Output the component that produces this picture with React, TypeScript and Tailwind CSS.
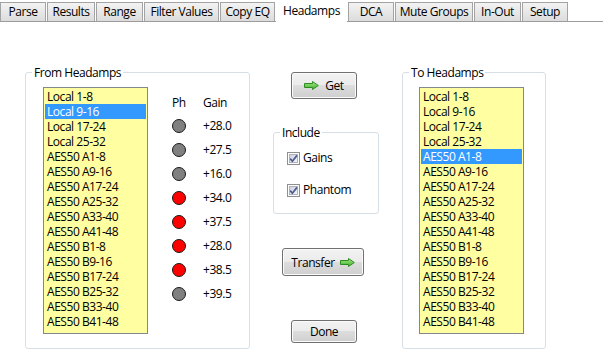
import { type ReactNode } from "react";

const TABS = [
  { label: "Parse", w: "w-[46px]" },
  { label: "Results", w: "w-[48px]" },
  { label: "Range", w: "w-[47px]" },
  { label: "Filter Values", w: "w-[75px]" },
  { label: "Copy EQ", w: "w-[55px]" },
  { label: "Headamps", w: "w-[71px]", active: true },
  { label: "DCA", w: "w-[46px]" },
  { label: "Mute Groups", w: "w-[78px]" },
  { label: "In-Out", w: "w-[47px]" },
  { label: "Setup", w: "w-[46px]" },
];

const HEADAMPS = [
  "Local 1-8",
  "Local 9-16",
  "Local 17-24",
  "Local 25-32",
  "AES50 A1-8",
  "AES50 A9-16",
  "AES50 A17-24",
  "AES50 A25-32",
  "AES50 A33-40",
  "AES50 A41-48",
  "AES50 B1-8",
  "AES50 B9-16",
  "AES50 B17-24",
  "AES50 B25-32",
  "AES50 B33-40",
  "AES50 B41-48",
];

const CHANNELS = [
  { ph: false, gain: "+28.0" },
  { ph: false, gain: "+27.5" },
  { ph: false, gain: "+16.0" },
  { ph: true, gain: "+34.0" },
  { ph: true, gain: "+37.5" },
  { ph: true, gain: "+28.0" },
  { ph: true, gain: "+38.5" },
  { ph: false, gain: "+39.5" },
];

function GreenArrow() {
  return (
    <svg width="15" height="9" viewBox="0 0 15 9" className="shrink-0">
      <defs>
        <linearGradient id="ga" x1="0" y1="0" x2="0" y2="1">
          <stop offset="0" stopColor="#a8ec86" />
          <stop offset="1" stopColor="#3fae2a" />
        </linearGradient>
      </defs>
      <path
        d="M0.5 2.5 H8.5 V0.5 L14.3 4.5 L8.5 8.5 V6.5 H0.5 Z"
        fill="url(#ga)"
        stroke="#2e8c22"
        strokeWidth="1"
        strokeLinejoin="round"
      />
    </svg>
  );
}

function Checkbox() {
  return (
    <svg width="13" height="13" viewBox="0 0 13 13" className="shrink-0">
      <defs>
        <linearGradient id="cb" x1="0" y1="0" x2="1" y2="1">
          <stop offset="0" stopColor="#cbcfd5" />
          <stop offset="1" stopColor="#f6f6f6" />
        </linearGradient>
      </defs>
      <rect x="0.5" y="0.5" width="12" height="12" fill="#fdfdfd" stroke="#8f8f8f" />
      <rect x="2.5" y="2.5" width="8" height="8" fill="url(#cb)" stroke="#b0b5bc" />
      <path d="M3.2 6.6 L5.4 9.2 L10 3.4" fill="none" stroke="#4a5d94" strokeWidth="1.7" />
    </svg>
  );
}

function WinButton({ children, className }: { children: ReactNode; className: string }) {
  return (
    <button
      className={`flex items-center justify-center gap-[5px] rounded-[3px] border border-[#707070] bg-[linear-gradient(#f2f2f2_0%,#ebebeb_50%,#dddddd_50%,#cfcfcf_100%)] shadow-[inset_0_0_0_1px_#fbfbfb] leading-[15px] ${className}`}
    >
      {children}
    </button>
  );
}

function ListBox({ items, selected }: { items: string[]; selected: number }) {
  return (
    <div className="w-[105px] h-[247px] shrink-0 border border-[#828790] bg-[#ffffa2] p-px">
      {items.map((it, i) => (
        <div
          key={it}
          className={`h-[15px] pl-[2px] leading-[15px] whitespace-nowrap ${
            i === selected ? "bg-[#3399ff] text-white" : ""
          }`}
        >
          {it}
        </div>
      ))}
    </div>
  );
}

function GroupBox({
  title,
  className,
  children,
}: {
  title: string;
  className: string;
  children: ReactNode;
}) {
  return (
    <fieldset className={`shrink-0 rounded-[3px] border border-[#d5dfe5] ${className}`}>
      <legend className="ml-[6px] px-[2px] leading-[15px]">{title}</legend>
      {children}
    </fieldset>
  );
}

export default function App() {
  return (
    <div className="w-[603px] h-[360px] overflow-hidden bg-white text-[12px] tracking-[-0.45px] text-black font-['Open_Sans',sans-serif]">
      {/* Tabs */}
      <div className="flex h-[22px] items-end border-b border-[#9c9c9c]">
        {TABS.map((t) =>
          t.active ? (
            <div
              key={t.label}
              className={`${t.w} mr-px -mb-px h-[22px] bg-white pt-[3px] text-center leading-[15px]`}
            >
              {t.label}
            </div>
          ) : (
            <div
              key={t.label}
              className={`${t.w} mr-px h-[19px] border border-b-0 border-[#a3a3a3] bg-[linear-gradient(#f3f3f3,#dcdcdc)] text-center leading-[17px]`}
            >
              {t.label}
            </div>
          )
        )}
      </div>

      {/* Body */}
      <div className="flex pt-[43px] pl-[25px]">
        <GroupBox title="From Headamps" className="w-[225px] h-[284px]">
          <div className="flex items-start pt-[7px] pl-[17px]">
            <ListBox items={HEADAMPS} selected={1} />
            <div className="ml-[24px] mt-[4px] grid grid-cols-[14px_auto] content-start gap-x-[17px]">
              <div className="h-[23px] leading-[23px] whitespace-nowrap">Ph</div>
              <div className="h-[23px] leading-[23px]">Gain</div>
              {CHANNELS.map((c, i) => (
                <div key={i} className="contents">
                  <div className="flex h-[24px] items-center">
                    <div
                      className={`w-[14px] h-[14px] rounded-full border border-[#1a1a1a] ${
                        c.ph ? "bg-[#ff0000]" : "bg-[#808080]"
                      }`}
                    />
                  </div>
                  <div className="h-[24px] leading-[24px]">{c.gain}</div>
                </div>
              ))}
            </div>
          </div>
        </GroupBox>

        <div className="ml-[23px] flex w-[106px] shrink-0 flex-col items-start">
          <WinButton className="mt-[7px] ml-[18px] w-[66px] h-[27px] gap-[6px]">
            <GreenArrow />
            <span>Get</span>
          </WinButton>

          <GroupBox title="Include" className="mt-[26px] w-[106px] h-[89px]">
            <div className="flex flex-col gap-[16px] pt-[10px] pl-[13px]">
              <label className="flex h-[16px] items-center gap-[3px]">
                <Checkbox />
                <span>Gains</span>
              </label>
              <label className="flex h-[16px] items-center gap-[3px]">
                <Checkbox />
                <span>Phantom</span>
              </label>
            </div>
          </GroupBox>

          <WinButton className="mt-[34px] ml-[9px] w-[82px] h-[28px]">
            <span>Transfer</span>
            <GreenArrow />
          </WinButton>

          <WinButton className="mt-[44px] ml-[18px] w-[66px] h-[23px]">
            <span>Done</span>
          </WinButton>
        </div>

        <GroupBox title="To Headamps" className="ml-[23px] w-[144px] h-[284px]">
          <div className="pt-[7px] pl-[16px]">
            <ListBox items={HEADAMPS} selected={4} />
          </div>
        </GroupBox>
      </div>
    </div>
  );
}
